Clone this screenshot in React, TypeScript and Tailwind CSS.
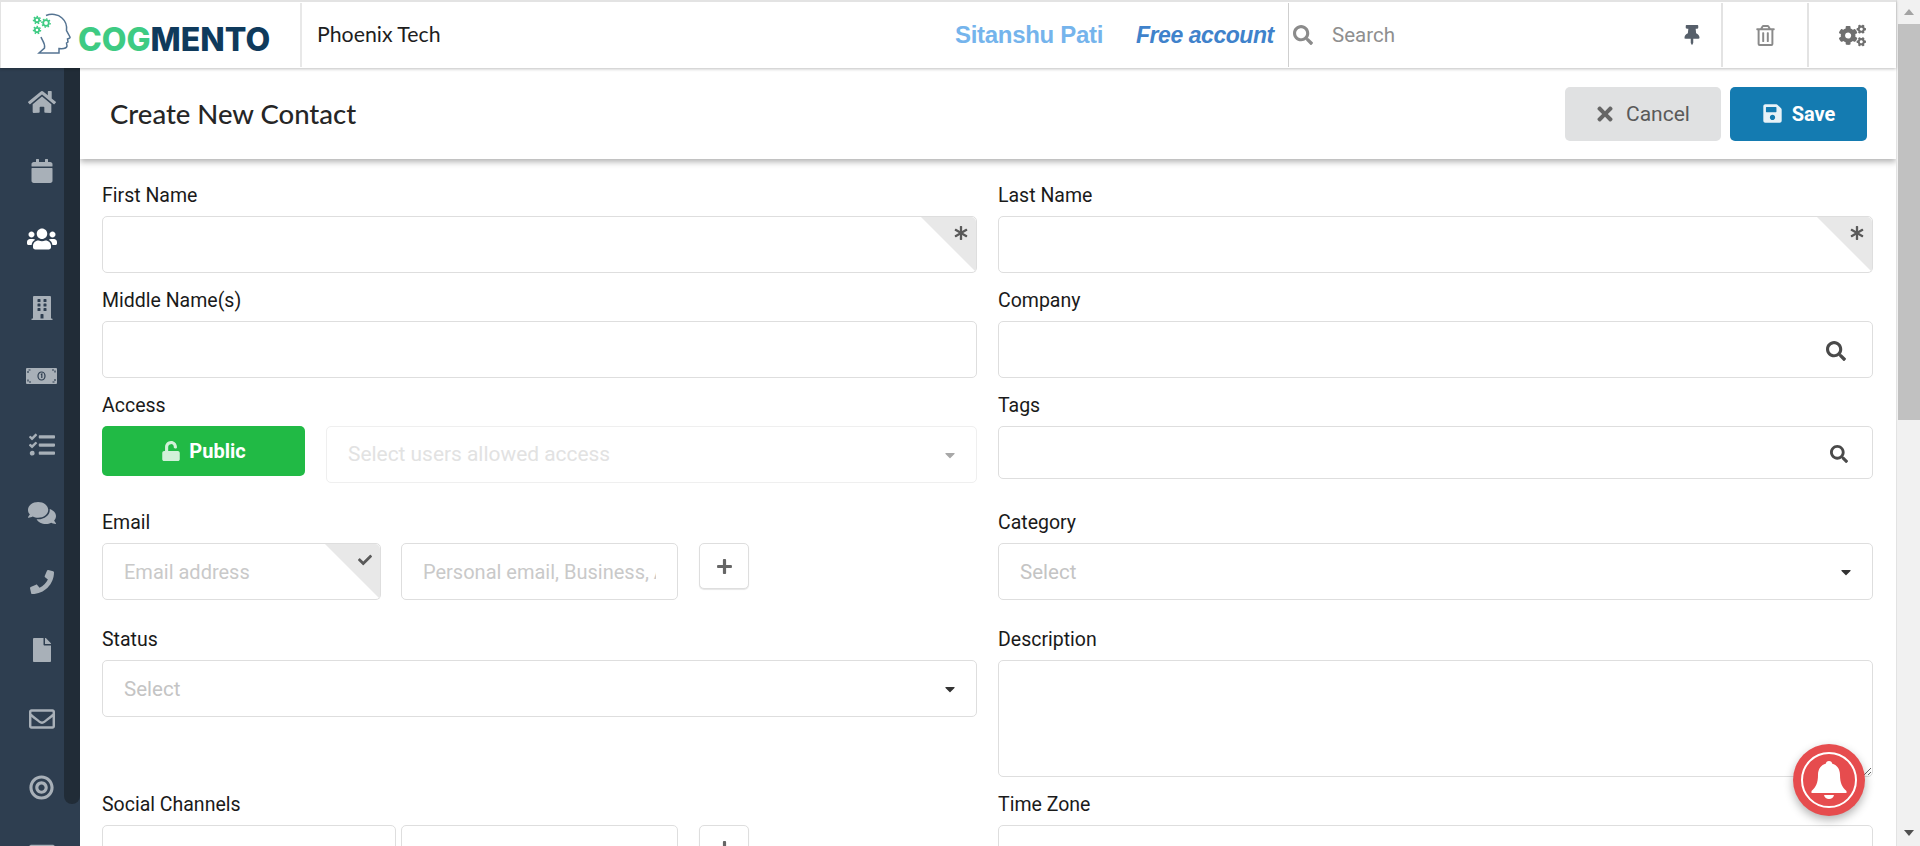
import React from 'react';
import {
  FaAsterisk,
  FaBuilding,
  FaCalendar,
  FaCaretDown,
  FaCheck,
  FaCogs,
  FaComments,
  FaFile,
  FaHome,
  FaPhone,
  FaPlus,
  FaRegEnvelope,
  FaRegListAlt,
  FaRegTrashAlt,
  FaBullseye,
  FaSave,
  FaSearch,
  FaTasks,
  FaThumbtack,
  FaTimes,
  FaUnlock,
  FaUsers,
} from 'react-icons/fa';

const MoneyIcon = ({ size, className }: { size?: number; className?: string }) => (
  <svg width={size} height={16} viewBox="0 0 31 16" className={className}>
    <rect width="31" height="16" rx="1" fill="currentColor" />
    <g fill="none" stroke="#2e3e50" strokeWidth="1.200">
      <path d="M2 5 V2 H5 M26 2 H29 V5 M29 11 V14 H26 M5 14 H2 V11" strokeDasharray="2 1.500" />
      <ellipse cx="15.500" cy="8" rx="3.500" ry="4" />
      <path d="M14.800 6.500 L15.800 6 V10" />
    </g>
  </svg>
);

const navItems = [
  { Icon: FaHome, size: 28 },
  { Icon: FaCalendar, size: 24 },
  { Icon: FaUsers, size: 30, active: true },
  { Icon: FaBuilding, size: 24 },
  { Icon: MoneyIcon, size: 31 },
  { Icon: FaTasks, size: 26 },
  { Icon: FaComments, size: 28 },
  { Icon: FaPhone, size: 24 },
  { Icon: FaFile, size: 24 },
  { Icon: FaRegEnvelope, size: 26 },
  { Icon: FaBullseye, size: 25 },
  { Icon: FaRegListAlt, size: 26 },
];

const Gear = ({ x, y, r }: { x: number; y: number; r: number }) => (
  <g>
    <circle cx={x} cy={y} r={r} fill="none" stroke="#3ecb83" strokeWidth="1.800" />
    <circle cx={x} cy={y} r={r + 1.400} fill="none" stroke="#3ecb83" strokeWidth="1.300" strokeDasharray="1.600 1.600" />
  </g>
);

const Logo = () => (
  <div className="flex items-center w-[299px] pl-[30px] shrink-0">
    <svg width="42" height="42" viewBox="0 0 42 42" className="mt-[-2px] shrink-0">
      <path
        d="M15 2.500 C20 0.500 27 1 31 5 C35 8.500 36 13 35.500 17.500 L39 24 C39.500 25 38 25.500 36.500 26 L37 29 L35.500 30 L36 33 C35.500 35.500 33 36 28 35.500 L28 40 L8 40 L13.500 35 C14.500 30 11 27.500 10 24"
        fill="none"
        stroke="#557492"
        strokeWidth="1.500"
      />
      <Gear x={6} y={7} r={2.200} />
      <Gear x={15} y={10} r={2.800} />
      <Gear x={6} y={17} r={2.200} />
    </svg>
    <div className="ml-[5px] mt-[10px] font-['Inter',sans-serif] font-extrabold text-[32px] leading-none">
      <span className="text-[#3ecb83]">COG</span>
      <span className="text-[#0f3a5c]">MENTO</span>
    </div>
  </div>
);

const Header = () => (
  <header className="h-[68px] shrink-0 flex items-stretch bg-white border-t-2 border-l border-[#e3e3e3] shadow-[0_1px_3px_rgba(0,0,0,0.25)] relative z-20">
    <Logo />
    <div className="flex-1 flex items-center border-l-2 border-[#e8e8e8] my-[1px] pl-[15px] font-['Lato',sans-serif] text-[21.300px] text-[#1e1e1e]">
      Phoenix Tech
    </div>
    <div className="w-[150px] self-center font-['Liberation_Sans',sans-serif] text-[24px] font-bold tracking-[-0.300px] text-[#75b4ec] whitespace-nowrap">
      Sitanshu Pati
    </div>
    <div className="ml-[31px] w-[152px] self-center font-['Liberation_Sans',sans-serif] text-[23px] italic font-bold tracking-[-0.450px] text-[#3f82cb] whitespace-nowrap">
      Free account
    </div>
    <div className="w-[433px] flex items-center border-l border-[#cfcfcf] my-[1px] pl-[4px]">
      <FaSearch size={20} className="text-[#8b8b8b]" />
      <span className="ml-[19px] font-['Roboto',sans-serif] text-[20.500px] text-[#8f8f8f]">Search</span>
      <FaThumbtack size={20} className="ml-auto mr-[19px] text-[#565f6a]" />
    </div>
    <div className="w-[86px] flex items-center justify-center border-l-2 border-[#e3e3e3] my-[1px]">
      <FaRegTrashAlt size={21} className="text-[#8a8a8a]" />
    </div>
    <div className="w-[89px] flex items-center justify-center border-l-2 border-[#e3e3e3] my-[1px]">
      <FaCogs size={27} className="text-[#6f6f6f]" />
    </div>
  </header>
);

const Sidebar = () => (
  <aside className="w-[80px] shrink-0 h-[778px] bg-[#2e3e50] relative overflow-hidden">
    <div className="absolute left-[64px] top-0 w-[16px] h-[736px] bg-[#212c37] rounded-b-[8px]" />
    <nav className="w-[83px] flex flex-col">
      {navItems.map(({ Icon, size, active }, i) => (
        <div key={i} className="h-[68.500px] shrink-0 flex items-center justify-center">
          <Icon size={size} className={active ? 'text-white' : 'text-[#a8b0b8]'} />
        </div>
      ))}
    </nav>
  </aside>
);

const labelClass = "h-[22px] pt-[3px] mb-[11px] flex items-center font-['Roboto',sans-serif] text-[19.500px] font-normal text-[#1a1a1a] whitespace-nowrap";
const inputClass =
  "w-full h-full rounded-[5px] border-[1.500px] border-[#dedede] bg-white pl-[21px] pr-[21px] font-['Roboto',sans-serif] text-[20px] outline-none placeholder:text-[#c9c9c9]";

const Corner = ({ icon }: { icon: React.ReactNode }) => (
  <div className="absolute right-[1px] top-[1px] w-[55px] h-[55px] bg-[#e8e8e8] rounded-tr-[5px] [clip-path:polygon(0_0,100%_0,100%_100%)]">
    <div className="absolute right-[8px] top-[9px] text-[#5a5a5a]">{icon}</div>
  </div>
);

const Field = ({ label, children }: { label: string; children: React.ReactNode }) => (
  <div className="min-w-0">
    <div className={labelClass}>{label}</div>
    {children}
  </div>
);

const SelectBox = ({ text, muted, className }: { text: string; muted?: boolean; className: string }) => (
  <div className={`flex items-center justify-between rounded-[5px] border-[1.500px] pl-[21px] pr-[18px] font-['Roboto',sans-serif] ${className} ${muted ? 'text-[20.900px] border-[#efefef] text-[#e2e2e2]' : 'text-[20.500px] border-[#dedede] text-[#c4c4c4]'}`}>
    <span className="mt-[1px]">{text}</span>
    <FaCaretDown size={16} className={muted ? 'text-[#a8a8a8]' : 'text-[#333333]'} />
  </div>
);

const PlusButton = () => (
  <button className="w-[50px] h-[46px] shrink-0 ml-[21px] flex items-center justify-center rounded-[5px] border-[1.500px] border-[#dedede] bg-white shadow-[0_1px_1px_rgba(0,0,0,0.1)]">
    <FaPlus size={17} className="text-[#666666]" />
  </button>
);

const Form = () => (
  <div className="pl-[22px] pr-[23px] pt-[24px]">
    <div className="grid grid-cols-2 gap-x-[21px] h-[105px]">
      <Field label="First Name">
        <div className="relative h-[57px]">
          <input className={inputClass} />
          <Corner icon={<FaAsterisk size={14} />} />
        </div>
      </Field>
      <Field label="Last Name">
        <div className="relative h-[57px]">
          <input className={inputClass} />
          <Corner icon={<FaAsterisk size={14} />} />
        </div>
      </Field>
    </div>
    <div className="grid grid-cols-2 gap-x-[21px] h-[105px]">
      <Field label="Middle Name(s)">
        <div className="h-[57px]">
          <input className={inputClass} />
        </div>
      </Field>
      <Field label="Company">
        <div className="relative h-[57px]">
          <input className={inputClass} />
          <FaSearch size={20} className="absolute right-[27px] top-[20px] text-[#4a4a4a]" />
        </div>
      </Field>
    </div>
    <div className="grid grid-cols-2 gap-x-[21px] h-[117px]">
      <Field label="Access">
        <div className="flex gap-[21px] items-start">
          <button className="w-[203px] h-[50px] shrink-0 flex items-center justify-center gap-[8px] rounded-[5px] bg-[#21ba45] font-['Roboto',sans-serif] text-[20px] font-bold text-white">
            <FaUnlock size={20} className="opacity-80" />
            Public
          </button>
          <SelectBox text="Select users allowed access" muted className="flex-1 h-[57px]" />
        </div>
      </Field>
      <Field label="Tags">
        <div className="relative h-[53px]">
          <input className={inputClass} />
          <FaSearch size={18} className="absolute right-[25px] top-[19px] text-[#4a4a4a]" />
        </div>
      </Field>
    </div>
    <div className="grid grid-cols-2 gap-x-[21px] h-[117px]">
      <Field label="Email">
        <div className="flex">
          <div className="relative w-[279px] h-[57px]">
            <input className={inputClass} placeholder="Email address" />
            <Corner icon={<FaCheck size={14} />} />
          </div>
          <div className="w-[277px] h-[57px] ml-[20px]">
            <input className={inputClass} placeholder="Personal email, Business, Alt..." />
          </div>
          <PlusButton />
        </div>
      </Field>
      <Field label="Category">
        <SelectBox text="Select" className="h-[57px]" />
      </Field>
    </div>
    <div className="grid grid-cols-2 gap-x-[21px] h-[165px]">
      <Field label="Status">
        <SelectBox text="Select" className="h-[57px]" />
      </Field>
      <Field label="Description">
        <textarea className="block w-full h-[117px] rounded-[5px] border-[1.500px] border-[#dedede] bg-white outline-none" />
      </Field>
    </div>
    <div className="grid grid-cols-2 gap-x-[21px]">
      <Field label="Social Channels">
        <div className="flex">
          <div className="w-[294px] h-[57px]">
            <input className={inputClass} />
          </div>
          <div className="w-[277px] h-[57px] ml-[5px]">
            <input className={inputClass} />
          </div>
          <PlusButton />
        </div>
      </Field>
      <Field label="Time Zone">
        <div className="h-[57px]">
          <input className={inputClass} />
        </div>
      </Field>
    </div>
  </div>
);

const PageScrollbar = () => (
  <div className="w-[24px] shrink-0 h-full bg-[#f1f1f1] border-l border-[#e3e3e3] flex flex-col items-center">
    <div className="h-[24px] flex items-center justify-center shrink-0">
      <div className="w-0 h-0 border-x-[5px] border-x-transparent border-b-[6px] border-b-[#a3a3a3]" />
    </div>
    <div className="w-[22px] h-[396px] bg-[#c1c1c1]" />
    <div className="mt-auto h-[26px] flex items-center justify-center shrink-0">
      <div className="w-0 h-0 border-x-[5px] border-x-transparent border-t-[6px] border-t-[#505050]" />
    </div>
  </div>
);

export default function App() {
  return (
    <div className="w-[1920px] h-[846px] overflow-hidden flex bg-white relative">
      <div className="w-[1896px] shrink-0 flex flex-col">
        <Header />
        <div className="flex flex-1 min-h-0">
          <Sidebar />
          <main className="flex-1 min-w-0 overflow-hidden">
            <div className="h-[91px] flex items-center justify-between pl-[30px] pr-[29px] bg-white shadow-[0_3px_6px_rgba(0,0,0,0.3)] relative z-10">
              <h1 className="mt-[1px] font-['Lato',sans-serif] text-[27.500px] font-medium text-[#262626]">Create New Contact</h1>
              <div className="flex gap-[9px]">
                <button className="w-[156px] h-[54px] pr-[2px] flex items-center justify-center gap-[10px] rounded-[5px] bg-[#e0e1e2] font-['Roboto',sans-serif] text-[21px] font-normal text-[#5a5a5a]">
                  <FaTimes size={22} className="text-[#666666]" />
                  <span className="mt-[2px]">Cancel</span>
                </button>
                <button className="w-[137px] h-[54px] flex items-center justify-center gap-[9px] rounded-[5px] bg-[#147bb1] font-['Roboto',sans-serif] text-[20px] font-bold text-white">
                  <FaSave size={21} className="opacity-90" />
                  Save
                </button>
              </div>
            </div>
            <Form />
          </main>
        </div>
      </div>
      <PageScrollbar />
      <button className="absolute left-[1793px] top-[744px] w-[72px] h-[72px] rounded-full bg-[#e64c4e] shadow-[0_4px_10px_rgba(0,0,0,0.3)] flex items-center justify-center">
        <span className="w-[56px] h-[56px] rounded-full border-2 border-white flex items-center justify-center">
          <svg width="36" height="38" viewBox="0 0 36 38" fill="white">
            <path d="M18 0 C20 0 21 1 21 2.500 C26 4 29 8 29 14 C29 22 31 26 35.500 30 L35.500 32 L0.500 32 L0.500 30 C5 26 7 22 7 14 C7 8 10 4 15 2.500 C15 1 16 0 18 0 Z" />
            <path d="M13 34 L23 34 C22.500 36.500 20.500 38 18 38 C15.500 38 13.500 36.500 13 34 Z" />
          </svg>
        </span>
      </button>
    </div>
  );
}
